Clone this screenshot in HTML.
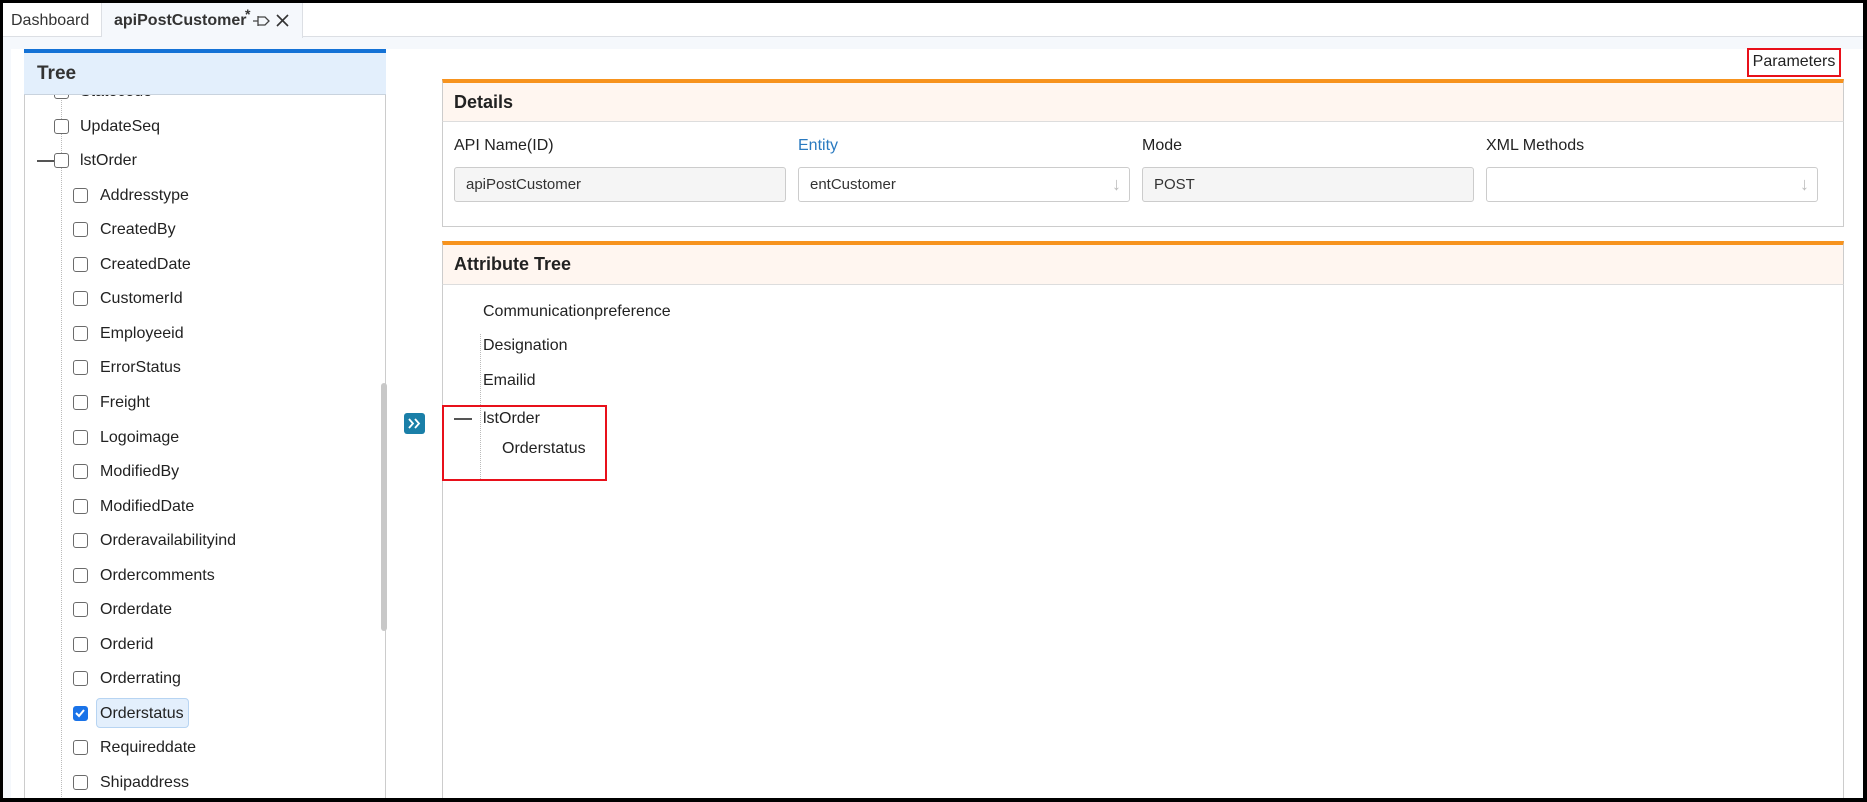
<!DOCTYPE html>
<html><head><meta charset="utf-8">
<style>
*{box-sizing:border-box;margin:0;padding:0}
body{width:1867px;height:802px;overflow:hidden;background:#000;font-family:"Liberation Sans",sans-serif;color:#222;position:relative}
.page{position:absolute;left:3px;top:3px;width:1860px;height:795px;background:#f5f8fc;overflow:hidden}
.abs{position:absolute}
.tabbar{left:0;top:0;width:1860px;height:34px;background:#fff;border-bottom:1px solid #dcdfe4}
.tab{top:0;height:34px;font-size:16px;line-height:36px;color:#333}
.panel{background:#fff}
.cb{position:absolute;width:15px;height:15px;border:1.5px solid #6b6b6b;border-radius:3px;background:#fff}
.t{position:absolute;font-size:16px;color:#222;white-space:nowrap}
.box{border:1px solid #ccc;background:#fff}
.hdr{background:#fff6f0;border-top:4px solid #f7931e;border-bottom:1px solid #ddd;border-left:1px solid #ccc;border-right:1px solid #ccc;font-weight:bold;font-size:18px;padding-left:11px}
.lbl{font-size:16px;color:#222}
.inp{height:35px;border:1px solid #ccc;border-radius:3px;font-size:15px;line-height:33px;padding-left:11px;color:#333}
</style></head><body>
<div class="page">
 <div class="abs tabbar"></div>
 <div class="abs tab" style="left:0;width:99px;padding-left:8px;border-right:1px solid #dcdfe4">Dashboard</div>
 <div class="abs tab" style="left:99px;width:201px;background:#f5f8fc;border-right:1px solid #dcdfe4;height:35px;padding-left:12px;font-weight:bold;color:#333">apiPostCustomer<span style="position:absolute;left:143px;top:-7px;font-size:14px">*</span>
  <svg class="abs" style="left:150px;top:11px" width="20" height="14" viewBox="0 0 20 14"><path d="M1 7H6M6 2V12M6 3H13L17 7L13 11H6" fill="none" stroke="#444" stroke-width="1.3"/></svg>
  <svg class="abs" style="left:174px;top:11px" width="13" height="13" viewBox="0 0 13 13"><path d="M1 1L12 12M12 1L1 12" stroke="#333" stroke-width="1.6"/></svg>
 </div>
 <div class="abs panel" style="left:8px;top:46px;width:1852px;height:760px"></div>
 <div class="abs" style="left:21px;top:46px;width:362px;height:760px;border:1px solid #ccc;border-top:none;background:#fff"></div>
 <div class="abs" style="left:21px;top:46px;width:362px;height:4px;background:#1472d6"></div>
 <div id="tree"></div>
 <div class="abs" style="left:21px;top:50px;width:362px;height:42px;background:#e3effc;border-bottom:1px solid #c9d3de;font-weight:bold;font-size:19px;line-height:42px;padding-left:13px;color:#333">Tree</div>
 <div class="abs" style="left:378px;top:380px;width:6px;height:248px;background:#c8c8c8;border-radius:3px"></div>
 <div class="abs" style="left:401px;top:410px;width:21px;height:21px;background:#1a7fa8;border-radius:3px"><svg width="21" height="21" viewBox="0 0 21 21"><path d="M5 6L9 10.5L5 15M11 6L15 10.5L11 15" fill="none" stroke="#fff" stroke-width="1.8"/></svg></div>
 <div class="abs" style="left:1744px;top:45px;width:94px;height:29px;border:2.5px solid #e8101a;font-size:16px;line-height:24px;text-align:center;color:#222">Parameters</div>
 <div class="abs box" style="left:439px;top:76px;width:1402px;height:148px"></div>
 <div class="abs hdr" style="left:439px;top:76px;width:1402px;height:43px;line-height:38px">Details</div>
 <div class="abs lbl" style="left:451px;top:134px">API Name(ID)</div>
 <div class="abs lbl" style="left:795px;top:134px;color:#2a7ac0">Entity</div>
 <div class="abs lbl" style="left:1139px;top:134px">Mode</div>
 <div class="abs lbl" style="left:1483px;top:134px">XML Methods</div>
 <div class="abs inp" style="left:451px;top:164px;width:332px;background:#f5f5f5">apiPostCustomer</div>
 <div class="abs inp" style="left:795px;top:164px;width:332px;background:#fff">entCustomer<span style="position:absolute;right:8px;top:0;color:#bbb;font-size:18px">↓</span></div>
 <div class="abs inp" style="left:1139px;top:164px;width:332px;background:#f5f5f5">POST</div>
 <div class="abs inp" style="left:1483px;top:164px;width:332px;background:#fff"><span style="position:absolute;right:8px;top:0;color:#bbb;font-size:18px">↓</span></div>
 <div class="abs box" style="left:439px;top:238px;width:1402px;height:560px"></div>
 <div class="abs hdr" style="left:439px;top:238px;width:1402px;height:44px;line-height:39px">Attribute Tree</div>
 <div class="abs" style="left:477px;top:331px;height:145px;border-left:1px dotted #bbb"></div>
 <div class="t" style="left:480px;top:300px">Communicationpreference</div>
 <div class="t" style="left:480px;top:334px">Designation</div>
 <div class="abs" style="left:451px;top:415px;width:18px;height:2px;background:#555"></div>
 <div class="t" style="left:480px;top:369px">Emailid</div>
 <div class="t" style="left:480px;top:407px">lstOrder</div>
 <div class="t" style="left:499px;top:437px">Orderstatus</div>
 <div class="abs" style="left:439px;top:402px;width:165px;height:76px;border:2.5px solid #e8101a"></div>
</div>
<script>
var items=[["Statecode",1],["UpdateSeq",1],["lstOrder",1],["Addresstype",2],["CreatedBy",2],["CreatedDate",2],["CustomerId",2],["Employeeid",2],["ErrorStatus",2],["Freight",2],["Logoimage",2],["ModifiedBy",2],["ModifiedDate",2],["Orderavailabilityind",2],["Ordercomments",2],["Orderdate",2],["Orderid",2],["Orderrating",2],["Orderstatus",2],["Requireddate",2],["Shipaddress",2]];
var h='<div class="abs" style="left:58px;top:80px;height:720px;border-left:1px dotted #bbb"></div>';
items.forEach(function(it,i){
 var cy=88+i*34.55; var cx=it[1]==1?51:70; var tx=it[1]==1?77:97;
 if(it[0]=="Orderstatus"){
  h+='<div class="abs" style="left:93px;top:'+(cy-15)+'px;width:93px;height:30px;background:#e3effc;border:1px solid #b7d4f2;border-radius:4px"></div>';
  h+='<div class="cb" style="left:'+cx+'px;top:'+(cy-7)+'px;background:#1a73e8;border-color:#1a73e8"><svg width="12" height="12" viewBox="0 0 12 12" style="position:absolute;left:0;top:0"><path d="M2 6L5 9L10 3" fill="none" stroke="#fff" stroke-width="2"/></svg></div>';
 } else h+='<div class="cb" style="left:'+cx+'px;top:'+(cy-7)+'px"></div>';
 if(it[0]=="lstOrder") h+='<div class="abs" style="left:34px;top:'+(cy)+'px;width:17px;height:2px;background:#555"></div>';
 h+='<div class="t" style="left:'+tx+'px;top:'+(cy-8)+'px">'+it[0]+'</div>';
});
var d=document.getElementById('tree');d.outerHTML='<div class="abs" style="left:0;top:80px;width:382px;height:715px;overflow:hidden"><div style="position:relative;top:-80px">'+h+'</div></div>';
</script>
</body></html>
